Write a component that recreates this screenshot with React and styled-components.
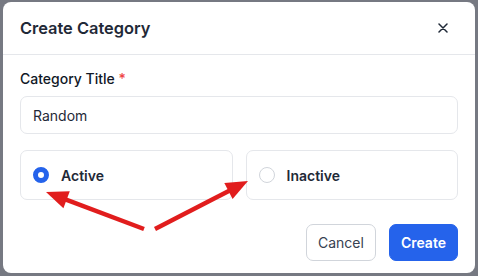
import React, { useState } from "react";
import styled, { createGlobalStyle } from "styled-components";

const Global = createGlobalStyle`
  html, body { margin: 0; padding: 0; }
  body {
    width: 478px; height: 276px; overflow: hidden;
    background: #767982;
    font-family: Inter, "Noto Sans", "Liberation Sans", sans-serif;
  }
`;

const Stage = styled.div`
  position: relative;
  width: 478px;
  height: 276px;
  padding: 2px 3px 3px 3px;
  box-sizing: border-box;
  display: flex;
`;

const Modal = styled.div`
  flex: 1;
  background: #fff;
  border-radius: 8px;
  display: flex;
  flex-direction: column;
  overflow: hidden;
`;

const Header = styled.div`
  height: 53px;
  border-bottom: 1px solid #e5e7eb;
  display: flex;
  align-items: center;
  justify-content: space-between;
  padding: 0 26px 0 17px;
  box-sizing: border-box;
`;

const Title = styled.h2`
  margin: 0;
  font-size: 16.4px;
  font-weight: 600;
  color: #1f2937;
`;

const Close = styled.button`
  border: 0;
  background: none;
  padding: 0;
  width: 12px;
  height: 12px;
  display: flex;
  align-items: center;
  justify-content: center;
  color: #1f2937;
  cursor: pointer;
`;

const Body = styled.div`
  padding: 14px 17px 0 17px;
  display: flex;
  flex-direction: column;
`;

const Label = styled.label`
  font-size: 14px;
  font-weight: 500;
  color: #111827;
  line-height: 20px;
  margin-bottom: 7px;
`;

const Req = styled.span`
  color: #ef4444;
`;

const Input = styled.input`
  height: 38px;
  box-sizing: border-box;
  border: 1px solid #e5e7eb;
  border-radius: 7px;
  padding: 0 12px;
  font-family: inherit;
  font-size: 14px;
  color: #1f2937;
  outline: none;
`;

const Options = styled.div`
  display: grid;
  grid-template-columns: 1fr 1fr;
  gap: 13px;
  margin-top: 16px;
`;

const Option = styled.label`
  height: 50px;
  box-sizing: border-box;
  border: 1px solid #e5e7eb;
  border-radius: 7px;
  display: flex;
  align-items: center;
  padding-left: 12px;
  gap: 12px;
  cursor: pointer;
`;

const Radio = styled.span`
  width: 16px;
  height: 16px;
  border-radius: 50%;
  box-sizing: border-box;
  background: #fff;
  border: ${(p) => (p.$checked ? "5px solid #2563eb" : "1px solid #d1d5db")};
`;

const OptionText = styled.span`
  font-size: 14px;
  font-weight: 600;
  color: #1f2937;
`;

const Footer = styled.div`
  display: flex;
  justify-content: flex-end;
  gap: 13px;
  padding: 24px 17px 0 17px;
`;

const Button = styled.button`
  height: 37px;
  box-sizing: border-box;
  border-radius: 7px;
  font-family: inherit;
  font-size: 14px;
  font-weight: ${(p) => (p.$primary ? 600 : 400)};
  padding: 0 11px;
  cursor: pointer;
  border: 1px solid ${(p) => (p.$primary ? "#2563eb" : "#d1d5db")};
  background: ${(p) => (p.$primary ? "#2563eb" : "#fff")};
  color: ${(p) => (p.$primary ? "#fff" : "#374151")};
`;

const Arrows = styled.svg`
  position: absolute;
  left: 0;
  top: 0;
  pointer-events: none;
`;

function Arrow({ x1, y1, x2, y2 }) {
  const dx = x2 - x1, dy = y2 - y1;
  const len = Math.hypot(dx, dy);
  const ux = dx / len, uy = dy / len;
  const hl = 22, hw = 9;
  const bx = x2 - ux * hl, by = y2 - uy * hl;
  const px = -uy, py = ux;
  return (
    <g fill="#e11d1d" stroke="#e11d1d">
      <line x1={x1} y1={y1} x2={bx + ux * 2} y2={by + uy * 2} strokeWidth="4.5" />
      <polygon
        stroke="none"
        points={`${x2},${y2} ${bx + px * hw},${by + py * hw} ${bx - px * hw},${by - py * hw}`}
      />
    </g>
  );
}

export default function App() {
  const [status, setStatus] = useState("active");
  return (
    <>
      <Global />
      <Stage>
        <Modal>
          <Header>
            <Title>Create Category</Title>
            <Close aria-label="Close">
              <svg width="10" height="10" viewBox="0 0 10 10">
                <path d="M1 1L9 9M9 1L1 9" stroke="currentColor" strokeWidth="1.5" strokeLinecap="round" />
              </svg>
            </Close>
          </Header>
          <Body>
            <Label>
              Category Title <Req>*</Req>
            </Label>
            <Input defaultValue="Random" />
            <Options>
              <Option onClick={() => setStatus("active")}>
                <Radio $checked={status === "active"} />
                <OptionText>Active</OptionText>
              </Option>
              <Option onClick={() => setStatus("inactive")}>
                <Radio $checked={status === "inactive"} />
                <OptionText>Inactive</OptionText>
              </Option>
            </Options>
          </Body>
          <Footer>
            <Button>Cancel</Button>
            <Button $primary>Create</Button>
          </Footer>
        </Modal>
        <Arrows width="478" height="276">
          <Arrow x1={144} y1={229} x2={46} y2={192} />
          <Arrow x1={155} y1={229} x2={248} y2={181} />
        </Arrows>
      </Stage>
    </>
  );
}
